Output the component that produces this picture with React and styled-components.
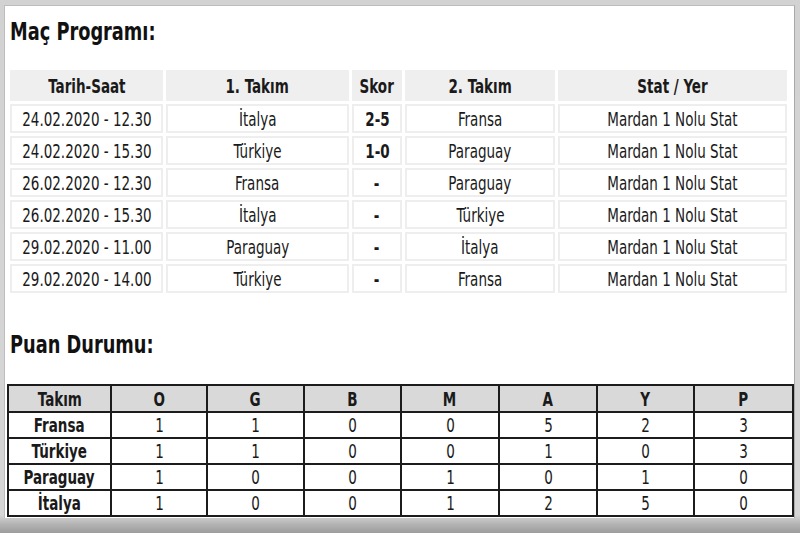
import React from "react";
import styled, { createGlobalStyle } from "styled-components";

const Global = createGlobalStyle`
  html, body { margin: 0; padding: 0; }
  body {
    width: 800px;
    height: 533px;
    overflow: hidden;
    font-family: "DejaVu Sans Condensed", "DejaVu Sans", sans-serif;
    font-stretch: condensed;
    color: #1a1a1a;
  }
`;

const Frame = styled.div`
  box-sizing: border-box;
  width: 800px;
  height: 533px;
  padding: 5px 5px 15px 4px;
  background: linear-gradient(to bottom, #d2d2d2 0, #d6d6d6 515px, #b4b4b4 524px, #9c9c9c 533px);
`;

const Panel = styled.div`
  box-sizing: border-box;
  height: 100%;
  background: #fff;
  border-top: 1px solid #bdbdbd;
  border-left: 1px solid #bdbdbd;
  border-right: 1px solid #a9a9a9;
  padding: 0 2px;
  overflow: hidden;
`;

/* Tahoma-like narrow lettering: condensed face squeezed horizontally */
const Narrow = styled.span`
  display: inline-block;
  white-space: nowrap;
  transform: scaleX(0.79);
  transform-origin: ${(p) => (p.$left ? "left center" : "center center")};
`;

const Title = styled.h2`
  margin: ${(p) => p.$top}px 0 0 3px;
  font-size: 25px;
  line-height: 30px;
  font-weight: bold;
  color: #111;
  white-space: nowrap;
`;

const Center = styled.div`
  display: flex;
  justify-content: center;
  align-items: center;
  white-space: nowrap;
`;

const ScheduleTable = styled.table`
  margin-top: 20px;
  width: 783px;
  border-spacing: 3px;
  table-layout: fixed;
  font-size: 19px;
`;

const SchedHead = styled.th`
  background: #efefef;
  height: 31px;
  padding: 0;
  font-weight: bold;
  overflow: visible;
`;

const SchedCell = styled.td`
  box-sizing: border-box;
  height: 29px;
  padding: 0;
  border: 2px solid #eeeeee;
  font-weight: ${(p) => (p.$bold ? "bold" : "normal")};
  overflow: visible;
`;

const StandTable = styled.table`
  margin-top: 24px;
  width: 785px;
  border-collapse: collapse;
  table-layout: fixed;
  font-size: 19px;
  border: 2px solid #1c1c1c;
`;

const StandRow = styled.tr`
  height: ${(p) => (p.$head ? 27 : 26)}px;
`;

const StandHead = styled.th`
  background: #d9d9d9;
  padding: 0;
  border: 2px solid #1c1c1c;
  font-weight: bold;
`;

const StandCell = styled.td`
  padding: 0;
  border: 2px solid #1c1c1c;
  font-weight: ${(p) => (p.$bold ? "bold" : "normal")};
`;

const matches = [
  ["24.02.2020 - 12.30", "İtalya", "2-5", "Fransa"],
  ["24.02.2020 - 15.30", "Türkiye", "1-0", "Paraguay"],
  ["26.02.2020 - 12.30", "Fransa", "-", "Paraguay"],
  ["26.02.2020 - 15.30", "İtalya", "-", "Türkiye"],
  ["29.02.2020 - 11.00", "Paraguay", "-", "İtalya"],
  ["29.02.2020 - 14.00", "Türkiye", "-", "Fransa"],
];

const standings = [
  ["Fransa", 1, 1, 0, 0, 5, 2, 3],
  ["Türkiye", 1, 1, 0, 0, 1, 0, 3],
  ["Paraguay", 1, 0, 0, 1, 0, 1, 0],
  ["İtalya", 1, 0, 0, 1, 2, 5, 0],
];

const schedCols = [153, 183, 50, 150, 229];
const standCols = [103, 96, 97, 97, 98, 98, 97, 99];

const T = ({ children }) => (
  <Center>
    <Narrow>{children}</Narrow>
  </Center>
);

export default function App() {
  return (
    <>
      <Global />
      <Frame>
        <Panel>
          <Title $top={11}>
            <Narrow $left>Maç Programı:</Narrow>
          </Title>
          <ScheduleTable>
            <colgroup>
              {schedCols.map((w, i) => (
                <col key={i} style={{ width: w }} />
              ))}
            </colgroup>
            <thead>
              <tr>
                {["Tarih-Saat", "1. Takım", "Skor", "2. Takım", "Stat / Yer"].map((h) => (
                  <SchedHead key={h}>
                    <T>{h}</T>
                  </SchedHead>
                ))}
              </tr>
            </thead>
            <tbody>
              {matches.map((m, i) => (
                <tr key={i}>
                  <SchedCell><T>{m[0]}</T></SchedCell>
                  <SchedCell><T>{m[1]}</T></SchedCell>
                  <SchedCell $bold><T>{m[2]}</T></SchedCell>
                  <SchedCell><T>{m[3]}</T></SchedCell>
                  <SchedCell><T>Mardan 1 Nolu Stat</T></SchedCell>
                </tr>
              ))}
            </tbody>
          </ScheduleTable>
          <Title $top={34}>
            <Narrow $left>Puan Durumu:</Narrow>
          </Title>
          <StandTable>
            <colgroup>
              {standCols.map((w, i) => (
                <col key={i} style={{ width: w }} />
              ))}
            </colgroup>
            <thead>
              <StandRow $head>
                {["Takım", "O", "G", "B", "M", "A", "Y", "P"].map((h) => (
                  <StandHead key={h}>
                    <T>{h}</T>
                  </StandHead>
                ))}
              </StandRow>
            </thead>
            <tbody>
              {standings.map((r) => (
                <StandRow key={r[0]}>
                  {r.map((v, j) => (
                    <StandCell key={j} $bold={j === 0}>
                      <T>{v}</T>
                    </StandCell>
                  ))}
                </StandRow>
              ))}
            </tbody>
          </StandTable>
        </Panel>
      </Frame>
    </>
  );
}
